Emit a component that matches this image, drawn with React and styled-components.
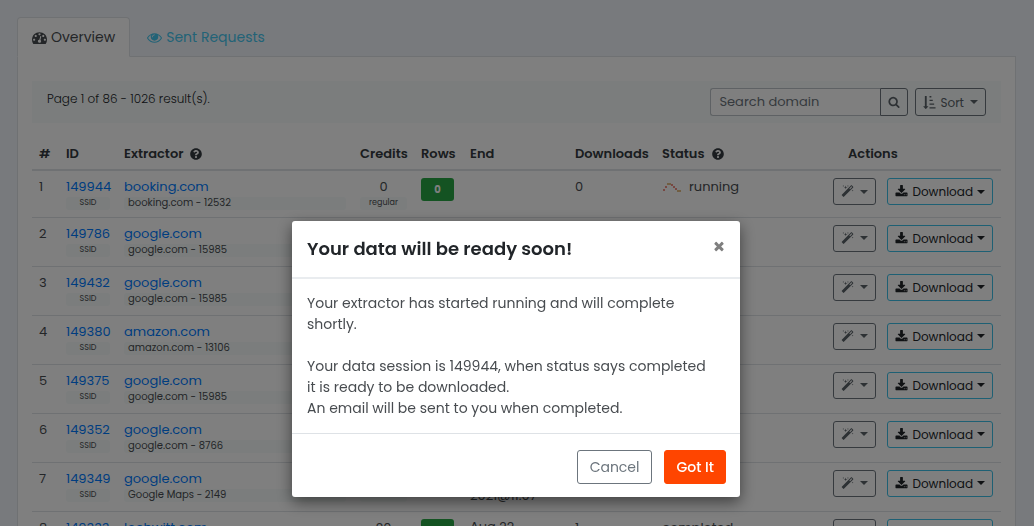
import React from "react";
import styled, { createGlobalStyle } from "styled-components";
import { FaQuestionCircle } from "react-icons/fa";

const GlobalStyle = createGlobalStyle`
    * {
        box-sizing: border-box;
    }
    body {
        margin: 0;
        overflow: hidden;
        background: #f1f5fb;
        color: #484c50;
        font-family: Poppins, Inter, sans-serif;
        font-size: 14px;
        line-height: 21px;
    }
    button,
    input {
        font: inherit;
    }
    a {
        text-decoration: none;
    }
`;

const Page = styled.div`
    height: 100vh;
    overflow: hidden;
    padding: 17px 18px 0 17px;
`;
const Tabs = styled.nav`
    display: flex;
    position: relative;
    z-index: 1;
    margin-bottom: -1px;
`;
const Tab = styled.a`
    display: flex;
    align-items: center;
    gap: 4px;
    height: 40px;
    padding: 0 14px;
    border: 1px solid ${(p) => (p.$active ? "#dee2e6" : "transparent")};
    border-bottom-color: ${(p) => (p.$active ? "#fff" : "transparent")};
    border-radius: 4px 4px 0 0;
    background: ${(p) => (p.$active ? "#fff" : "transparent")};
    color: ${(p) => (p.$active ? "#484c50" : "#45c6ee")};
    margin-right: 2px;
`;
const Panel = styled.main`
    background: #fff;
    border: 1px solid #dee2e6;
    padding: 24px 14px;
`;
const Toolbar = styled.div`
    display: flex;
    justify-content: space-between;
    height: 42px;
    padding: 7px 15px;
    background: #f6fbfa;
`;
const ResultCount = styled.span`
    color: #212529;
    font-size: 12px;
    font-weight: 300;
`;
const Tools = styled.div`
    display: flex;
    gap: 7px;
`;
const SearchBox = styled.form`
    display: flex;
`;
const SearchInput = styled.input`
    width: 170px;
    height: 28px;
    padding: 0 8px;
    border: 1px solid #bdc3c8;
    border-right: 0;
    border-radius: 3px 0 0 3px;
    background: #fff;
    font-size: 13px;
    &::placeholder {
        color: #6c757d;
        opacity: 1;
    }
`;
const SmallButton = styled.button`
    display: inline-flex;
    align-items: center;
    justify-content: center;
    gap: 4px;
    height: ${(p) => (p.$size === "tool" ? "28px" : "27px")};
    padding: 0 7px;
    border: 1px solid ${(p) => (p.$info ? "#3dc1e8" : "#6c757d")};
    border-radius: ${(p) => (p.$joined ? "0 3px 3px 0" : "3px")};
    background: transparent;
    color: ${(p) => (p.$info ? "#212529" : "#5a6268")};
    font-size: 12px;
`;
const Caret = styled.span`
    border: 4px solid transparent;
    border-top-color: currentColor;
    border-bottom: 0;
    margin-left: ${(p) => (p.$wide ? "2px" : "0")};
`;
const Table = styled.table`
    width: 100%;
    margin-top: 15px;
    border-collapse: collapse;
    table-layout: fixed;
    th,
    td {
        padding: 6px 7px;
        text-align: left;
        vertical-align: top;
    }
    th {
        height: 32px;
        padding: 5px 7px;
        border-bottom: 2px solid #dee2e6;
        color: #343a40;
        font-size: 13px;
        font-weight: 600;
        white-space: nowrap;
    }
    th:last-child {
        padding-left: 21px;
    }
    td {
        height: 49px;
        border-bottom: 1px solid #dee2e6;
        font-size: 13px;
    }
    tr:first-child td {
        height: 47px;
    }
    td:last-child {
        padding-right: 8px;
    }
`;
const HeadLabel = styled.span`
    display: flex;
    align-items: center;
    gap: 7px;
`;
const TableLink = styled.a`
    display: block;
    color: #007bff;
    line-height: 20px;
`;
const Note = styled.span`
    display: block;
    height: 13px;
    padding: 0 4px;
    border-radius: 3px;
    background: #f6fbfa;
    font-size: ${(p) => (p.$small ? "8px" : "10px")};
    line-height: 12px;
    text-align: ${(p) => (p.$small ? "center" : "left")};
`;
const Value = styled.span`
    display: block;
    line-height: 20px;
    text-align: ${(p) => (p.$center ? "center" : "left")};
`;
const EndDate = styled.time`
    display: block;
    line-height: 18px;
`;
const RowsBadge = styled.span`
    display: block;
    width: 33px;
    height: 23px;
    margin-top: 1px;
    border-radius: 3px;
    background: #28a745;
    color: #fff;
    font-size: 10px;
    font-weight: 700;
    line-height: 23px;
    text-align: center;
`;
const Status = styled.span`
    display: flex;
    align-items: center;
    gap: 8px;
    line-height: 20px;
`;
const Actions = styled.div`
    display: flex;
    justify-content: flex-end;
    gap: 11px;
    margin-top: 1px;
`;

const Backdrop = styled.div`
    position: fixed;
    inset: 0;
    z-index: 10;
    display: flex;
    align-items: flex-start;
    justify-content: center;
    padding: 221px 2px 0 0;
    background: rgba(0, 0, 0, 0.5);
`;
const Dialog = styled.section`
    width: 100%;
    max-width: 448px;
    border-radius: 3px;
    background: #fff;
    box-shadow: 0 5px 15px rgba(0, 0, 0, 0.5);
`;
const DialogHeader = styled.header`
    display: flex;
    justify-content: space-between;
    align-items: flex-start;
    height: 58px;
    padding: 14px;
    padding-left: 15px;
    border-bottom: 2px solid #e9ecef;
`;
const DialogTitle = styled.h2`
    margin: 0;
    color: #212529;
    font-size: 18px;
    font-weight: 600;
    line-height: 27px;
`;
const CloseButton = styled.button`
    display: flex;
    padding: 4px 0;
    border: 0;
    background: none;
    color: #7f7f7f;
`;
const DialogBody = styled.div`
    padding: 14px 30px 14px 15px;
    p {
        margin: 0;
    }
    p + p {
        margin-top: 21px;
    }
`;
const DialogFooter = styled.footer`
    display: flex;
    align-items: center;
    justify-content: flex-end;
    gap: 12px;
    padding: 16px 14px 13px;
    border-top: 1px solid #dee2e6;
`;
const DialogButton = styled.button`
    height: 34px;
    padding: 0 ${(p) => (p.$primary ? "11px" : "12px")};
    border: 1px solid ${(p) => (p.$primary ? "#ff4500" : "#6c757d")};
    border-radius: 3px;
    background: ${(p) => (p.$primary ? "#ff4500" : "#fff")};
    color: ${(p) => (p.$primary ? "#fff" : "#6c757d")};
    font-weight: ${(p) => (p.$primary ? 500 : 400)};
`;

const icons = {
    dashboard:
        "M384 1152q0-53-37.5-90.5t-90.5-37.5-90.5 37.5-37.5 90.5 37.5 90.5 90.5 37.5 90.5-37.5 37.5-90.5zm192-448q0-53-37.5-90.5t-90.5-37.5-90.5 37.5-37.5 90.5 37.5 90.5 90.5 37.5 90.5-37.5 37.5-90.5zm428 481l101-382q6-26-7.5-48.5t-38.5-29.5-48 6.5-30 39.5l-101 382q-60 5-107 43.5t-63 98.5q-20 77 20 146t117 89 146-20 89-117q16-60-6-117t-72-91zm660-33q0-53-37.5-90.5t-90.5-37.5-90.5 37.5-37.5 90.5 37.5 90.5 90.5 37.5 90.5-37.5 37.5-90.5zm-640-640q0-53-37.5-90.5t-90.5-37.5-90.5 37.5-37.5 90.5 37.5 90.5 90.5 37.5 90.5-37.5 37.5-90.5zm448 192q0-53-37.5-90.5t-90.5-37.5-90.5 37.5-37.5 90.5 37.5 90.5 90.5 37.5 90.5-37.5 37.5-90.5zm320 448q0 261-141 483-19 29-54 29h-1402q-35 0-54-29-141-221-141-483 0-182 71-348t191-286 286-191 348-71 348 71 286 191 191 286 71 348z",
    eye: "M1664 960q-152-236-381-353 61 104 61 225 0 185-131.5 316.5t-316.5 131.5-316.5-131.5-131.5-316.5q0-121 61-225-229 117-381 353 133 205 333.5 326.5t434.5 121.5 434.5-121.5 333.5-326.5zm-720-384q0-20-14-34t-34-14q-125 0-214.5 89.5t-89.5 214.5q0 20 14 34t34 14 34-14 14-34q0-86 61-147t147-61q20 0 34-14t14-34zm848 384q0 34-20 69-140 230-376.5 368.5t-499.5 138.5-499.5-139-376.5-368q-20-35-20-69t20-69q140-229 376.5-368t499.5-139 499.5 139 376.5 368q20 35 20 69z",
    magic: "M1254 581l293-293-107-107-293 293zm447-293q0 27-18 45l-1286 1286q-18 18-45 18t-45-18l-198-198q-18-18-18-45t18-45l1286-1286q18-18 45-18t45 18l198 198q18 18 18 45zm-1351-190l98 30-98 30-30 98-30-98-98-30 98-30 30-98zm350 162l196 60-196 60-60 196-60-196-196-60 196-60 60-196zm930 478l98 30-98 30-30 98-30-98-98-30 98-30 30-98zm-640-640l98 30-98 30-30 98-30-98-98-30 98-30 30-98z",
    download:
        "M1344 1344q0-26-19-45t-45-19-45 19-19 45 19 45 45 19 45-19 19-45zm256 0q0-26-19-45t-45-19-45 19-19 45 19 45 45 19 45-19 19-45zm128-224v320q0 40-28 68t-68 28h-1472q-40 0-68-28t-28-68v-320q0-40 28-68t68-28h465l135 136q58 56 136 56t136-56l136-136h464q40 0 68 28t28 68zm-325-569q17 41-14 70l-448 448q-18 19-45 19t-45-19l-448-448q-31-29-14-70 17-39 59-39h256v-448q0-26 19-45t45-19h256q26 0 45 19t19 45v448h256q42 0 59 39z",
    search: "M1216 832q0-185-131.5-316.5t-316.5-131.5-316.5 131.5-131.5 316.5 131.5 316.5 316.5 131.5 316.5-131.5 131.5-316.5zm512 832q0 52-38 90t-90 38q-54 0-90-38l-343-342q-179 124-399 124-143 0-273.5-55.5t-225-150-150-225-55.5-273.5 55.5-273.5 150-225 225-150 273.5-55.5 273.5 55.5 225 150 150 225 55.5 273.5q0 220-124 399l343 343q37 37 37 90z",
    times: "M1490 1322q0 40-28 68l-136 136q-28 28-68 28t-68-28l-294-294-294 294q-28 28-68 28t-68-28l-136-136q-28-28-28-68t28-68l294-294-294-294q-28-28-28-68t28-68l136-136q28-28 68-28t68 28l294 294 294-294q28-28 68-28t68 28l136 136q28 28 28 68t-28 68l-294 294 294 294q28 28 28 68z",
    sort: "M736 1440q0 12-10 24l-319 319q-10 9-23 9-12 0-23-9l-320-320q-15-16-7-35 8-20 30-20h192v-1376q0-14 9-23t23-9h192q14 0 23 9t9 23v1376h192q14 0 23 9t9 23zm160-1440h256v192h-256zm0 512h448v192h-448zm0 512h640v192h-640zm0 512h832v192h-832z",
};

function Icon({ name, size }) {
    return (
        <svg width={size} height={size} viewBox="0 0 1792 1792" fill="currentColor" aria-hidden="true">
            <path d={icons[name]} />
        </svg>
    );
}

// dotted curve, red dots turning yellow at the top and the tail
function RunningIcon() {
    return (
        <svg width="19" height="12" viewBox="0 0 19 12" aria-hidden="true">
            <g fill="#e8685c">
                <circle cx="2" cy="9" r="1" />
                <circle cx="4" cy="6" r="1" />
                <circle cx="10" cy="4" r="1" />
                <circle cx="12" cy="6" r="1" />
                <circle cx="14" cy="8" r="1" />
            </g>
            <g fill="#d9a75c">
                <circle cx="6" cy="3" r="1" />
                <circle cx="8" cy="3" r="1" />
                <circle cx="16" cy="10" r="1" />
                <circle cx="18" cy="10" r="1" />
            </g>
        </svg>
    );
}

const widths = [27, 58, null, 61, 49, 105, 87, 172, 174];

const sessions = [
    { id: 149944, site: "booking.com", note: "booking.com - 12532", credits: 0, plan: "regular", rows: 0, downloads: 0, status: "running" },
    { id: 149786, site: "google.com", note: "google.com - 15985" },
    { id: 149432, site: "google.com", note: "google.com - 15985" },
    { id: 149380, site: "amazon.com", note: "amazon.com - 13106" },
    { id: 149375, site: "google.com", note: "google.com - 15985" },
    { id: 149352, site: "google.com", note: "google.com - 8766" },
    { id: 149349, site: "google.com", note: "Google Maps - 2149", plan: "advanced", end: ["Aug 22,", "2021@11:07"] },
    { id: 149333, site: "lochwitt.com", note: "lochwitt.com - 2149", credits: 20, plan: "advanced", rows: 20, end: ["Aug 22,", "2021@11:01"], downloads: 1, status: "completed" },
];

function SessionRow({ session, index }) {
    return (
        <tr>
            <td><Value>{index + 1}</Value></td>
            <td>
                <TableLink href="#">{session.id}</TableLink>
                <Note $small>SSID</Note>
            </td>
            <td>
                <TableLink href="#">{session.site}</TableLink>
                <Note>{session.note}</Note>
            </td>
            <td>
                <Value $center>{session.credits ?? "\u00a0"}</Value>
                {session.plan && <Note $small>{session.plan}</Note>}
            </td>
            <td>{session.rows !== undefined && <RowsBadge>{session.rows}</RowsBadge>}</td>
            <td>{session.end && session.end.map((line) => <EndDate key={line}>{line}</EndDate>)}</td>
            <td><Value>{session.downloads}</Value></td>
            <td>
                <Status>
                    {session.status === "running" && <RunningIcon />}
                    {session.status}
                </Status>
            </td>
            <td>
                <Actions>
                    <SmallButton aria-label="Tools"><Icon name="magic" size={13} /><Caret $wide /></SmallButton>
                    <SmallButton $info><Icon name="download" size={13} />Download<Caret /></SmallButton>
                </Actions>
            </td>
        </tr>
    );
}

function App() {
    return (
        <>
            <GlobalStyle />
            <Page>
                <Tabs>
                    <Tab href="#" $active><Icon name="dashboard" size={15} />Overview</Tab>
                    <Tab href="#"><Icon name="eye" size={15} />Sent Requests</Tab>
                </Tabs>
                <Panel>
                    <Toolbar>
                        <ResultCount>Page 1 of 86 - 1026 result(s).</ResultCount>
                        <Tools>
                            <SearchBox>
                                <SearchInput aria-label="Search domain" placeholder="Search domain" />
                                <SmallButton $size="tool" $joined type="button" aria-label="Search"><Icon name="search" size={12} /></SmallButton>
                            </SearchBox>
                            <SmallButton $size="tool"><Icon name="sort" size={13} />Sort<Caret $wide /></SmallButton>
                        </Tools>
                    </Toolbar>
                    <Table>
                        <colgroup>
                            {widths.map((width, i) => <col key={i} width={width} />)}
                        </colgroup>
                        <thead>
                            <tr>
                                <th>#</th>
                                <th>ID</th>
                                <th><HeadLabel>Extractor <FaQuestionCircle size={12} /></HeadLabel></th>
                                <th>Credits</th>
                                <th>Rows</th>
                                <th>End</th>
                                <th>Downloads</th>
                                <th><HeadLabel>Status <FaQuestionCircle size={12} /></HeadLabel></th>
                                <th>Actions</th>
                            </tr>
                        </thead>
                        <tbody>
                            {sessions.map((session, i) => <SessionRow key={session.id} session={session} index={i} />)}
                        </tbody>
                    </Table>
                </Panel>
            </Page>
            <Backdrop>
                <Dialog role="dialog" aria-modal="true" aria-labelledby="dialog-title">
                    <DialogHeader>
                        <DialogTitle id="dialog-title">Your data will be ready soon!</DialogTitle>
                        <CloseButton aria-label="Close"><Icon name="times" size={14} /></CloseButton>
                    </DialogHeader>
                    <DialogBody>
                        <p>Your extractor has started running and will complete shortly.</p>
                        <p>
                            Your data session is 149944, when status says completed it is ready to be downloaded.
                            <br />
                            An email will be sent to you when completed.
                        </p>
                    </DialogBody>
                    <DialogFooter>
                        <DialogButton>Cancel</DialogButton>
                        <DialogButton $primary>Got It</DialogButton>
                    </DialogFooter>
                </Dialog>
            </Backdrop>
        </>
    );
}

export default App;
